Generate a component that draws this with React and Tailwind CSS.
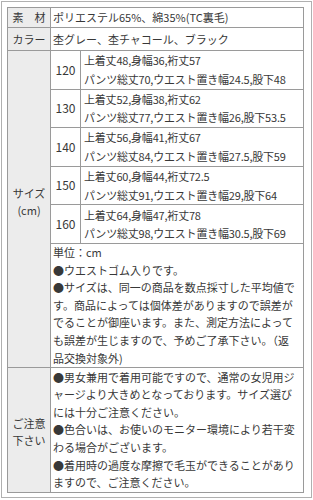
import React from "react";

const sizes = [
  { size: "120", top: "上着丈48,身幅36,裄丈57", pants: "パンツ総丈70,ウエスト置き幅24.5,股下48" },
  { size: "130", top: "上着丈52,身幅38,裄丈62", pants: "パンツ総丈77,ウエスト置き幅26,股下53.5" },
  { size: "140", top: "上着丈56,身幅41,裄丈67", pants: "パンツ総丈84,ウエスト置き幅27.5,股下59" },
  { size: "150", top: "上着丈60,身幅44,裄丈72.5", pants: "パンツ総丈91,ウエスト置き幅29,股下64" },
  { size: "160", top: "上着丈64,身幅47,裄丈78", pants: "パンツ総丈98,ウエスト置き幅30.5,股下69" },
];

const head = "border border-[#9a9a9a] bg-[#ececec] text-center align-middle p-0";
const cell = "border border-[#9a9a9a] bg-white align-middle p-0";

const App = () => {
  return (
    <div
      className="w-[313px] h-[500px] bg-white p-px text-[#383838] text-[11px] leading-[18.5px]"
      style={{ fontFamily: '"Noto Sans CJK JP", "Noto Sans", sans-serif' }}
    >
      <div className="w-[311px] h-[497px] border border-[#b0b0b0] pt-[5px] pl-[5px]">
        <table className="w-[297px] table-fixed border-collapse">
          <colgroup>
            <col className="w-[43px]" />
            <col className="w-[30px]" />
            <col />
          </colgroup>
          <tbody>
            <tr className="h-[20px]">
              <td className={head}>素　材</td>
              <td className={cell + " pl-[2px] whitespace-nowrap"} colSpan={2}>
                ポリエステル65%、綿35%(TC裏毛)
              </td>
            </tr>
            <tr className="h-[23px]">
              <td className={head}>カラー</td>
              <td className={cell + " pl-[2px] whitespace-nowrap"} colSpan={2}>
                杢グレー、杢チャコール、ブラック
              </td>
            </tr>
            {sizes.map((s, i) => (
              <tr key={s.size} className="h-[38.6px]">
                {i === 0 && (
                  <td className={head + " leading-[17px] pb-[14px]"} rowSpan={6}>
                    サイズ
                    <br />
                    (cm)
                  </td>
                )}
                <td className={cell + " text-center text-[12px]"}>{s.size}</td>
                <td className={cell + " pl-[3px] whitespace-nowrap tracking-[-0.2px]"}>
                  {s.top}
                  <br />
                  {s.pants}
                </td>
              </tr>
            ))}
            <tr className="h-[124px]">
              <td className={cell + " pl-[2px] whitespace-nowrap leading-[17.6px]"} colSpan={2}>
                単位：cm
                <br />
                ●ウエストゴム入りです。
                <br />
                ●サイズは、同一の商品を数点採寸した平均値で
                <br />
                す。商品によっては個体差がありますので誤差が
                <br />
                でることが御座います。また、測定方法によって
                <br />
                も誤差が生じますので、予めご了承下さい。（返
                <br />
                品交換対象外)
              </td>
            </tr>
            <tr className="h-[125px]">
              <td className={head + " leading-[17px] pt-[4px]"}>
                ご注意
                <br />
                下さい
              </td>
              <td className={cell + " pl-[2px] whitespace-nowrap leading-[17.6px]"} colSpan={2}>
                ●男女兼用で着用可能ですので、通常の女児用ジ
                <br />
                ャージより大きめとなっております。サイズ選び
                <br />
                には十分ご注意ください。
                <br />
                ●色合いは、お使いのモニター環境により若干変
                <br />
                わる場合がございます。
                <br />
                ●着用時の過度な摩擦で毛玉ができることがあり
                <br />
                ますので、ご注意ください。
              </td>
            </tr>
          </tbody>
        </table>
      </div>
    </div>
  );
};

export default App;
